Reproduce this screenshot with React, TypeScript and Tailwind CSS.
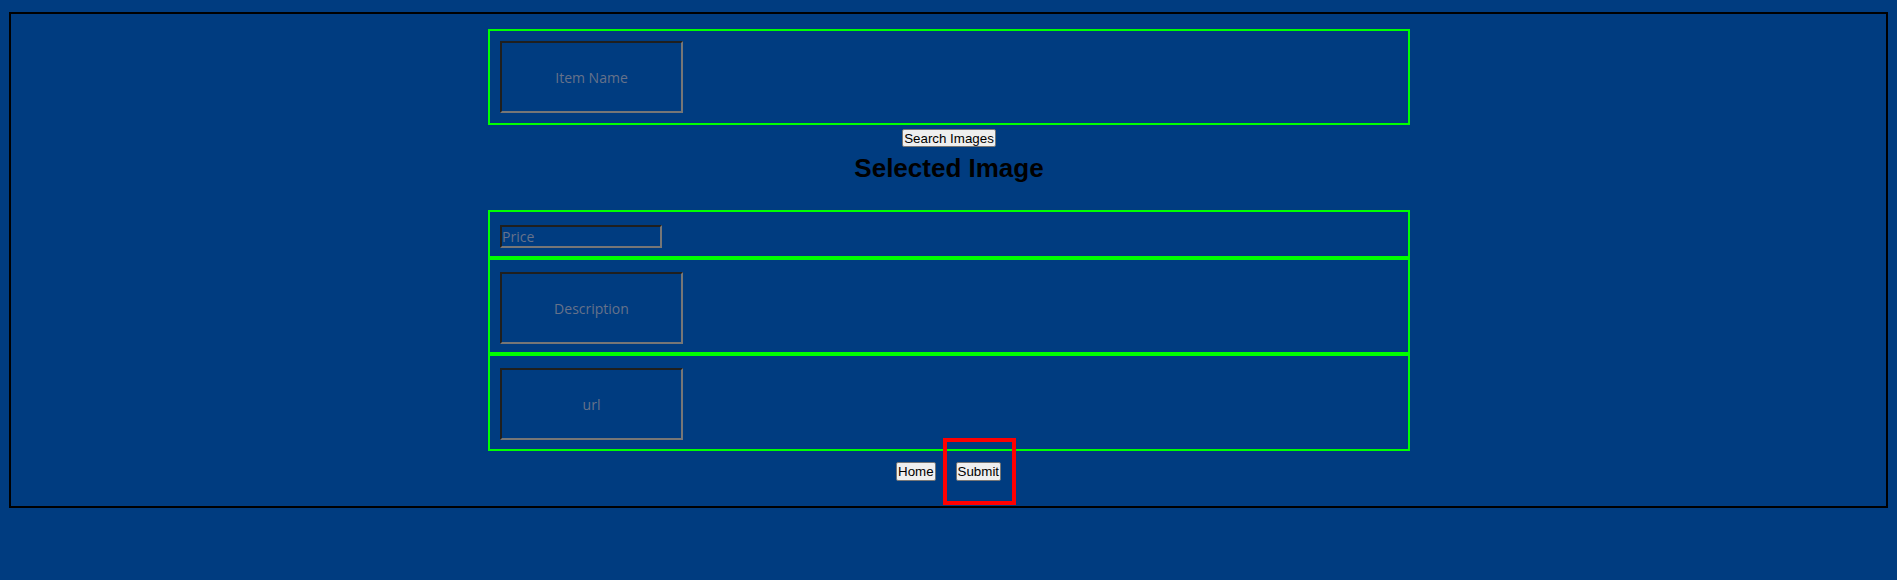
import React from "react";

const inputBase =
  "bg-transparent border-2 border-t-[#1f1f1f] border-l-[#1f1f1f] border-b-[#767676] border-r-[#767676] outline-none font-['Open_Sans',sans-serif] text-[#66728a] placeholder:text-[#66728a]";

const btn =
  "bg-[#efefef] border border-[#767676] rounded-[2px] text-black text-[13.33px] leading-[15px] font-['Liberation_Sans',Arial,sans-serif] px-[1px]";

export default function App() {
  return (
    <div className="min-h-[580px] w-full bg-[#003c80] pt-[12px] pl-[9px]">
      <div className="w-[1879px] h-[496px] border-2 border-black pl-[477px] pt-[15px]">
        <div className="w-[922px] flex flex-col">
          <div className="h-[96px] border-2 border-[#00ff00] pl-[10px] pt-[10px]">
            <input
              className={`${inputBase} w-[183px] h-[72px] text-center text-[14px]`}
              placeholder="Item Name"
            />
          </div>
          <div className="mt-[4px] w-[922px] flex justify-center">
            <button className={`${btn} h-[18px]`}>Search Images</button>
          </div>
          <div className="mt-[6px] w-[922px] text-center font-['Liberation_Sans',Arial,sans-serif] font-bold text-[26px] leading-[30px] text-black">
            Selected Image
          </div>
          <div className="mt-[27px] h-[48px] border-2 border-[#00ff00] pl-[10px] pt-[12px]">
            <input
              className={`${inputBase} w-[162px] h-[23px] text-left text-[14px] px-0`}
              placeholder="Price"
            />
          </div>
          <div className="h-[96px] border-2 border-[#00ff00] pl-[10px] pt-[12px]">
            <input
              className={`${inputBase} w-[183px] h-[72px] text-center text-[14px]`}
              placeholder="Description"
            />
          </div>
          <div className="h-[97px] border-2 border-[#00ff00] pl-[10px] pt-[12px]">
            <input
              className={`${inputBase} w-[183px] h-[72px] text-center text-[14px]`}
              placeholder="url"
            />
          </div>
          <div className="mt-[-13px] pl-[408px] flex items-center gap-[7px]">
            <button className={`${btn} h-[19px]`}>Home</button>
            <div className="border-4 border-[#ff0000] pl-[9px] pr-[11px] py-[20px] flex">
              <button className={`${btn} h-[19px]`}>Submit</button>
            </div>
          </div>
        </div>
      </div>
    </div>
  );
}
